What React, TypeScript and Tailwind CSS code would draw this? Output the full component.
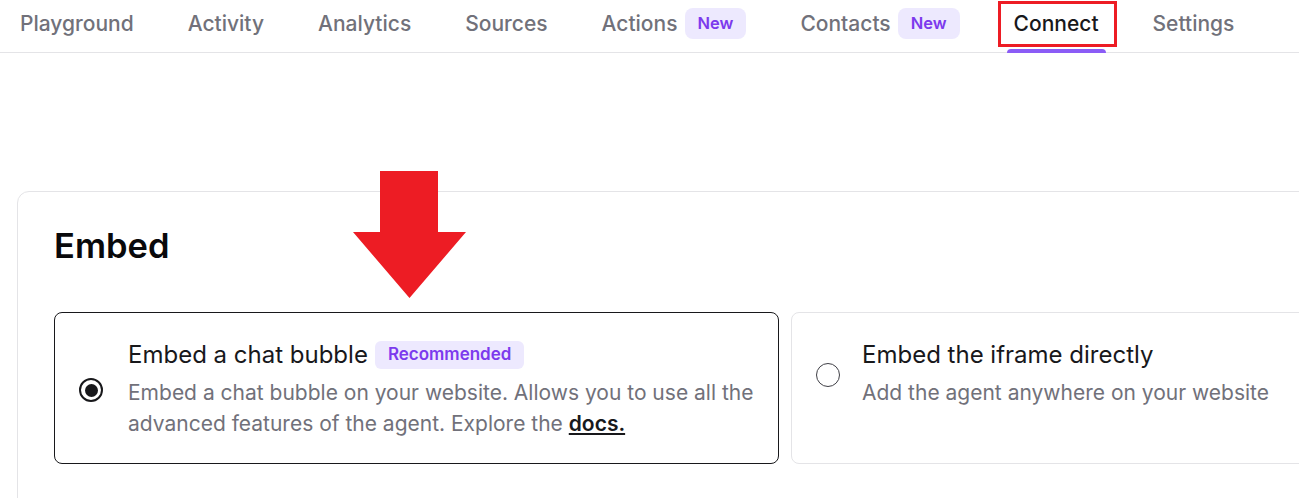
import { Fragment } from "react";

const tabs = [
  { label: "Playground" },
  { label: "Activity" },
  { label: "Analytics" },
  { label: "Sources" },
  { label: "Actions", badge: "New" },
  { label: "Contacts", badge: "New" },
  { label: "Connect", active: true },
  { label: "Settings" },
];

const Radio = ({ checked }: { checked?: boolean }) => (
  <div
    className={`w-6 h-6 shrink-0 rounded-full flex items-center justify-center ${
      checked ? "border-2 border-[#18181b]" : "border border-[#3f3f46]"
    }`}
  >
    {checked && <div className="w-[13px] h-[13px] rounded-full bg-[#18181b]" />}
  </div>
);

const App = () => {
  return (
    <main
      className="relative w-[1299px] h-[498px] overflow-hidden bg-white"
      style={{ fontFamily: "Inter, 'Noto Sans', sans-serif" }}
    >
      {/* Tabs */}
      <nav className="flex h-[53px] border-b border-[#e4e4e7] pl-[13px] gap-[40px]">
        {tabs.map((t) => (
          <div key={t.label} className="relative flex items-center h-full px-[7px] pb-[5px]">
            <span
              className={`text-[21px] font-medium ${
                t.active ? "text-[#18181b]" : "text-[#71717a]"
              }`}
            >
              {t.label}
            </span>
            {t.badge && (
              <span className="ml-[7px] h-[31px] px-[13px] flex items-center rounded-lg bg-[#ede9fe] text-[#7c3aed] text-[16.5px] font-semibold">
                {t.badge}
              </span>
            )}
            {t.active && (
              <Fragment>
                <div className="absolute left-0 right-0 bottom-[-1px] h-[4px] rounded-t bg-[#8b5cf6]" />
                <div className="absolute left-[-9px] right-[-11px] top-[1px] h-[46px] border-[3px] border-[#ed1c24]" />
              </Fragment>
            )}
          </div>
        ))}
      </nav>

      {/* Embed card */}
      <section className="mt-[138px] ml-[17px] w-[1540px] h-[400px] border border-[#e4e4e7] rounded-xl px-[36px] pt-[30px]">
        <h1 className="text-[34.5px] leading-[48px] font-semibold text-[#09090b]">Embed</h1>
        <div className="mt-[42px] flex gap-[12px]">
          <div className="w-[725px] flex items-start border border-[#18181b] rounded-lg px-[24px] pt-[28px] pb-[24px]">
            <div className="flex items-center gap-[25px]">
              <Radio checked />
              <div>
                <div className="flex items-center gap-[7px] h-[28px]">
                  <span className="text-[24px] text-[#18181b]">Embed a chat bubble</span>
                  <span className="h-[28px] px-[13px] flex items-center rounded-md bg-[#ede9fe] text-[#7c3aed] text-[17px] font-semibold">
                    Recommended
                  </span>
                </div>
                <p className="mt-[8px] text-[21px] leading-[31px] text-[#71717a]">
                  Embed a chat bubble on your website. Allows you to use all the
                  <br />
                  advanced features of the agent. Explore the{" "}
                  <a className="font-semibold text-[#18181b] underline">docs.</a>
                </p>
              </div>
            </div>
          </div>
          <div className="w-[725px] flex items-start border border-[#e4e4e7] rounded-lg px-[24px] pt-[28px] pb-[24px]">
            <div className="flex items-center gap-[22px]">
              <Radio />
              <div>
                <div className="flex items-center h-[28px]">
                  <span className="text-[24px] text-[#18181b]">Embed the iframe directly</span>
                </div>
                <p className="mt-[8px] text-[21px] leading-[31px] text-[#71717a]">
                  Add the agent anywhere on your website
                </p>
              </div>
            </div>
          </div>
        </div>
      </section>

      {/* Red arrow annotation */}
      <svg
        className="absolute left-[353px] top-[171px]"
        width="114"
        height="128"
        viewBox="0 0 114 128"
      >
        <polygon points="27,0 85,0 85,61 113,61 56.5,127 0,61 27,61" fill="#ed1c24" />
      </svg>
    </main>
  );
};

export default App;
